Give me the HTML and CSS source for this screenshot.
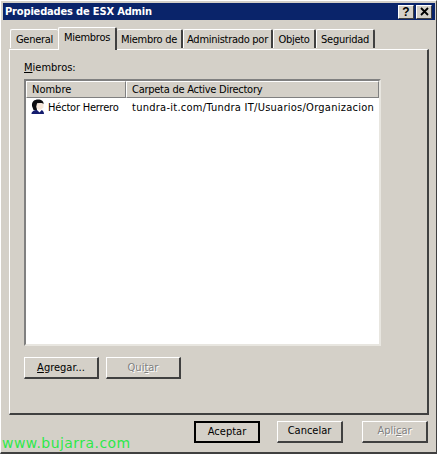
FILE: index.html
```html
<!DOCTYPE html>
<html lang="es">
<head>
  <meta charset="UTF-8" />
  <title>Propiedades de ESX Admin</title>
  <link rel="stylesheet" href="styles.css">
</head>
<body>
  <div class="window">
    <div class="titlebar">
      <span class="title">Propiedades de ESX Admin</span>
      <button class="caption-btn help">?</button>
      <button class="caption-btn close">
        <svg width="9" height="9" viewBox="0 0 9 9"><path d="M1 1 L8 8 M8 1 L1 8" stroke="#000" stroke-width="1.8" fill="none"/></svg>
      </button>
    </div>

    <div class="tabs">
      <div class="tab tab-general">General</div>
      <div class="tab tab-miembros active">Miembros</div>
      <div class="tab tab-de">Miembro de</div>
      <div class="tab tab-admin">Administrado por</div>
      <div class="tab tab-objeto">Objeto</div>
      <div class="tab tab-seguridad">Seguridad</div>
    </div>

    <div class="panel">
      <div class="list-label"><u>M</u>iembros:</div>
      <div class="list">
        <div class="list-head">
          <div class="col col-name">Nombre</div>
          <div class="col col-folder">Carpeta de Active Directory</div>
        </div>
        <div class="list-row">
          <div class="cell-name">
            <svg class="user-icon" width="16" height="16" viewBox="2 0 16 16">
              <path d="M3 7 C2.5 2.5 5.5 0.5 9 0.5 C12.5 0.5 15 2.5 14.5 5 L12 4 L8 4.5 L7.5 8 L8 11 L4.5 11 Z" fill="#0c0c10"/>
              <path d="M8 4.5 L12 4 L14.5 5 L14.5 8.5 L12 10.5 L9 10.5 L7.5 8 Z" fill="#f6e6d8"/>
              <path d="M2.5 15 C2.5 12.5 5 11 8 11 L10.5 13 L12.5 11 C14 11.5 15 13 15 15 Z" fill="#141c6e"/>
              <path d="M8.5 11 L10.5 13.5 L12.5 11 Z" fill="#fff"/>
            </svg>
            <span class="name-text">Héctor Herrero</span>
          </div>
          <div class="cell-folder">tundra-it.com/Tundra IT/Usuarios/Organizacion</div>
        </div>
      </div>
      <div class="list-buttons">
        <button class="btn small"><u>A</u>gregar...</button>
        <button class="btn small disabled">Qui<u>t</u>ar</button>
      </div>
    </div>

    <div class="footer">
      <button class="btn wide default">Aceptar</button>
      <button class="btn wide">Cancelar</button>
      <button class="btn wide disabled">Apli<u>c</u>ar</button>
    </div>
  </div>
  <div class="watermark">www.bujarra.com</div>
</body>
</html>
```

FILE: styles.css
```css
html, body {
  margin: 0;
  padding: 0;
}

body {
  width: 437px;
  height: 454px;
  overflow: hidden;
  position: relative;
  background: #d4d0c8;
  font-family: "DejaVu Sans Condensed", "Liberation Sans", Arial, sans-serif;
  font-size: 11px;
  color: #000;
}

.window {
  box-sizing: border-box;
  width: 437px;
  height: 454px;
  padding: 2px 1px 2px 2px;
  border-right: 1px solid #404040;
  border-bottom: 2px solid #404040;
  border-top: 1px solid #fff;
  border-left: 1px solid #fff;
}

.titlebar {
  height: 17px;
  background: #0a246a;
  display: flex;
  align-items: center;
  gap: 2px;
  padding: 0 3px 0 2px;
  color: #fff;
}

.title {
  flex: 1;
  font-weight: bold;
  font-size: 11px;
  letter-spacing: -0.16px;
}

.caption-btn {
  box-sizing: border-box;
  width: 16px;
  height: 14px;
  padding: 0;
  margin: 0;
  background: #d4d0c8;
  border: 1px solid;
  border-color: #fff #404040 #404040 #fff;
  display: flex;
  align-items: center;
  justify-content: center;
  font-family: "Liberation Sans", Arial, sans-serif;
  font-weight: bold;
  font-size: 12px;
  color: #000;
}

.tabs {
  display: flex;
  align-items: flex-end;
  height: 24px;
  padding-left: 7px;
  margin-top: 5px;
  position: relative;
  z-index: 1;
}

.tab {
  box-sizing: border-box;
  height: 19px;
  margin-bottom: 1px;
  text-align: center;
  line-height: 19px;
  letter-spacing: -0.28px;
  border: 1px solid #fff;
  border-right: 2px solid #404040;
  border-bottom: 0;
  border-radius: 2px 2px 0 0;
  background: #d4d0c8;
}

.tab.active {
  height: 23px;
  margin-bottom: -1px;
  line-height: 20px;
}

.tab-general { width: 48px; border-right: 0; }
.tab-miembros { width: 59px; }
.tab-de { width: 66px; border-left: 0; }
.tab-admin { width: 90px; }
.tab-objeto { width: 43px; }
.tab-seguridad { width: 59px; }

.panel {
  box-sizing: border-box;
  width: 420px;
  height: 366px;
  margin-left: 6px;
  padding: 12px 0 0 14px;
  border: 1px solid;
  border-color: #fff #404040 #404040 #fff;
  border-right-width: 2px;
  border-bottom-width: 2px;
}

.list-label {
  height: 17px;
  line-height: 12px;
}

.list {
  box-sizing: border-box;
  width: 357px;
  height: 267px;
  background: #fff;
  border: 2px solid;
  border-color: #808080 #e8e6e0 #e8e6e0 #808080;
}

.list-head {
  display: flex;
  height: 17px;
  background: #d4d0c8;
}

.col {
  box-sizing: border-box;
  height: 17px;
  line-height: 15px;
  padding-left: 5px;
  border: 1px solid;
  border-color: #fff #808080 #808080 #fff;
}

.col-name { width: 100px; }
.col-folder { width: 253px; letter-spacing: -0.26px; }

.list-row {
  display: flex;
  height: 18px;
  align-items: center;
  white-space: nowrap;
}

.cell-name {
  width: 100px;
  flex: none;
  display: flex;
  align-items: center;
  padding-left: 5px;
  box-sizing: border-box;
}

.name-text {
  letter-spacing: -0.2px;
}

.user-icon {
  margin-right: 1px;
  flex: none;
}

.cell-folder {
  padding-left: 6px;
  letter-spacing: 0.26px;
}

.list-buttons {
  display: flex;
  gap: 7px;
  margin-top: 11px;
}

.btn {
  box-sizing: border-box;
  height: 22px;
  padding: 0 0 2px;
  background: #d4d0c8;
  border: 1px solid;
  border-color: #fff #404040 #404040 #fff;
  border-right-width: 2px;
  border-bottom-width: 2px;
  font-family: "DejaVu Sans Condensed", "Liberation Sans", Arial, sans-serif;
  font-size: 11px;
  color: #000;
}

.btn.small { width: 75px; padding: 0; }
.btn.wide { width: 66px; }

.btn.default {
  border: 2px solid #000;
}

.btn.disabled {
  color: #808080;
  text-shadow: 1px 1px 0 #fff;
}

.footer {
  display: flex;
  justify-content: flex-end;
  gap: 17px;
  margin-top: 6px;
  width: 425px;
}

.footer .btn:nth-child(3) {
  margin-left: 2px;
}

.watermark {
  position: absolute;
  left: 2px;
  top: 435px;
  font-family: "DejaVu Sans", sans-serif;
  font-size: 14px;
  letter-spacing: 0.45px;
  color: #2ee84a;
  line-height: 17px;
}
```
